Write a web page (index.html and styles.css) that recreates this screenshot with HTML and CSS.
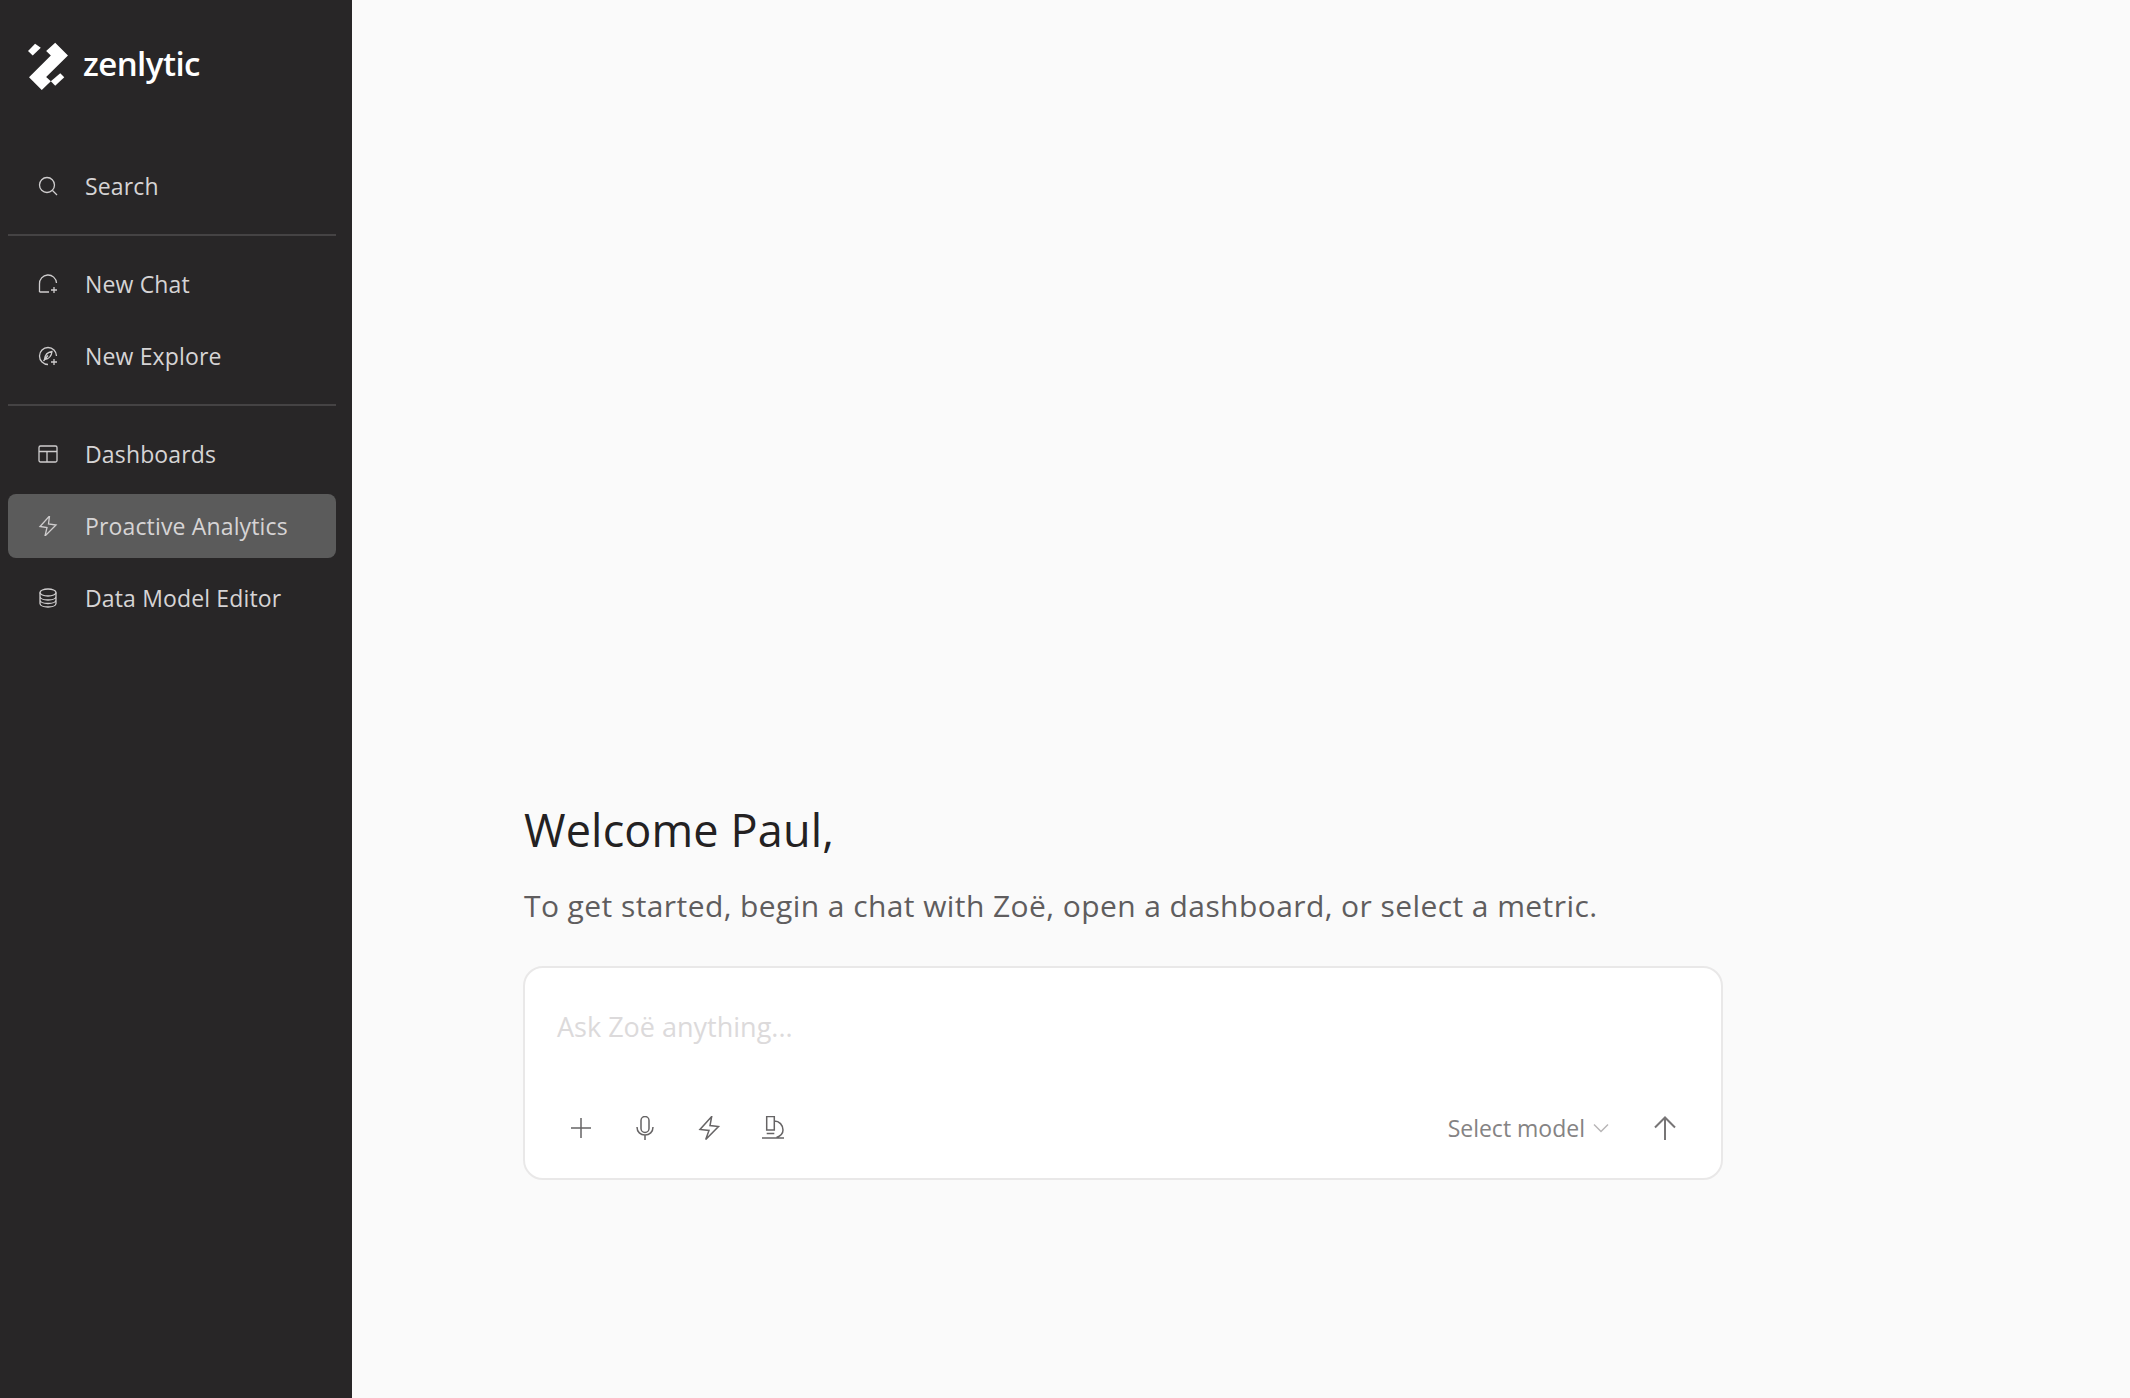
FILE: index.html
```html
<!DOCTYPE html>
<html lang="en">
<head>
<meta charset="utf-8">
<title>Zenlytic</title>
<link rel="stylesheet" href="styles.css">
</head>
<body>
<div class="app">
  <aside class="sidebar">
    <div class="brand">
      <svg class="logo" viewBox="24 35 122 146" fill="#fff">
        <polygon points="24,62 45,40 62,52 38,75"/>
        <polygon points="105,37 143,75 78,139 92,152 65,178 27,140 92,75 78,62"/>
        <polygon points="92,152 120,128 132,140 105,165"/>
      </svg>
      <span class="wordmark">zenlytic</span>
    </div>
    <nav class="nav">
      <a class="item"><svg class="ico" viewBox="0 0 20 20"><circle cx="9" cy="9" r="7.500"/><path d="M14.500 14.500 19 19"/></svg><span>Search</span></a>
      <hr class="rule">
      <a class="item"><svg class="ico" viewBox="0 0 20 20"><path d="M1.500 18V10a8.500 8.500 0 0 1 17-1M1.500 18H11M16 13v6M13 16h6"/></svg><span>New Chat</span></a>
      <a class="item"><svg class="ico" viewBox="0 0 20 20"><path d="M18.500 10a8.500 8.500 0 1 0-8.500 8.500M14 5.500c-4 .5-7 3-7.500 8 4-.5 7-3 7.500-8ZM5.500 15 10 9.500M16 13v6M13 16h6"/></svg><span>New Explore</span></a>
      <hr class="rule">
      <a class="item"><svg class="ico" viewBox="0 0 20 20"><rect x="1" y="2" width="18" height="16" rx="1.500"/><path d="M1 7.500h18M9 7.500V18"/></svg><span>Dashboards</span></a>
      <a class="item active"><svg class="ico" viewBox="0 0 20 20"><path d="M11.500 0 2 10.500l7 1L7 20 18 9l-7.500-1 1-8Z"/></svg><span>Proactive Analytics</span></a>
      <a class="item"><svg class="ico" viewBox="0 0 20 20"><ellipse cx="10" cy="4.500" rx="8" ry="3.500"/><path d="M2 4.500v11c0 2 3.500 3.500 8 3.500s8-1.500 8-3.500v-11M2 8.500c0 2 3.500 3.500 8 3.500s8-1.500 8-3.500M2 12c0 2 3.500 3.500 8 3.500s8-1.500 8-3.500"/></svg><span>Data Model Editor</span></a>
    </nav>
  </aside>
  <main class="main">
    <section class="welcome">
      <h1 class="title">Welcome Paul,</h1>
      <p class="subtitle">To get started, begin a chat with Zoë, open a dashboard, or select a metric.</p>
      <div class="composer">
        <div class="placeholder">Ask Zoë anything...</div>
        <div class="toolbar">
          <div class="tools">
            <svg class="tool" viewBox="0 0 24 24"><path d="M12 2v20M2 12h20"/></svg>
            <svg class="tool" viewBox="0 0 24 24"><rect x="8" y="0.500" width="8" height="16" rx="4"/><path d="M4 11c0 5 3.500 8 8 8s8-3 8-8M12 19v5"/></svg>
            <svg class="tool" viewBox="0 0 24 24"><path d="M14.700 0.500 3 13.500l9 1L8.700 23.500 21.500 10.500 13 9.500l1.700-9Z"/></svg>
            <svg class="tool" viewBox="0 0 24 24"><path d="M1 22h22M5.700 17.500h7.600M5.700 0.500h7.600V14H5.700zM13.300 5c5 0 8.700 4 8.700 9 0 3-2.500 6-6.500 7.500"/></svg>
          </div>
          <div class="send-area">
            <span class="model">Select model</span>
            <svg class="chev" viewBox="0 0 16 10"><path d="M1 1.500 8 8.500 15 1.500"/></svg>
            <svg class="send" viewBox="0 0 22 24"><path d="M11 24V1.500M1 11.500 11 1.500l10 10"/></svg>
          </div>
        </div>
      </div>
    </section>
  </main>
</div>
</body>
</html>
```

FILE: styles.css
```css
* { box-sizing: border-box; }
html, body { margin: 0; height: 100%; }
body {
  font-family: "Open Sans", "Liberation Sans", sans-serif;
  background: #fafafa;
  overflow: hidden;
}
.app { display: flex; height: 1398px; }
.sidebar {
  width: 352px;
  flex: none;
  background: #282627;
  padding: 0 16px 0 8px;
}
.brand {
  display: flex;
  align-items: center;
  gap: 14px;
  height: 64px;
  margin-top: 34px;
  padding-left: 20px;
}
.logo { flex: none; width: 41px; height: 49px; }
.wordmark {
  color: #fff;
  font-size: 33px;
  font-weight: 600;
  letter-spacing: -0.550px;
  margin-top: -5px;
}
.nav { display: flex; flex-direction: column; margin-top: 56px; gap: 8px; }
.item {
  display: flex;
  align-items: center;
  height: 64px;
  padding-left: 30px;
  border-radius: 8px;
  color: #d6d4d5;
  font-size: 23px;
  letter-spacing: 0.150px;
}
.item.active { background: #5b5b5b; }
.ico {
  width: 20px;
  height: 20px;
  flex: none;
  margin-right: 27px;
  fill: none;
  stroke: #cfcdce;
  stroke-width: 1.300;
}
.rule {
  border: 0;
  height: 2px;
  background: #454344;
  margin: 8px 0;
  width: 328px;
}
.main { flex: 1; padding: 797px 0 0 171px; }
.welcome { width: 1200px; }
.title {
  margin: 0 0 0 1px;
  font-size: 45px;
  line-height: 66px;
  font-weight: 400;
  letter-spacing: 0.150px;
  color: #232122;
}
.subtitle {
  margin: 22px 0 0 1px;
  font-size: 30px;
  line-height: 42px;
  letter-spacing: 0.420px;
  color: #5f5d5e;
  white-space: nowrap;
}
.composer {
  margin-top: 39px;
  height: 214px;
  background: #fff;
  border: 2px solid #e9e8e8;
  border-radius: 20px;
  padding: 41px 45px 0 32px;
}
.placeholder {
  font-size: 27px;
  line-height: 36px;
  color: #dcdadb;
}
.toolbar {
  display: flex;
  justify-content: space-between;
  align-items: center;
  margin-top: 67px;
  height: 32px;
}
.tools { display: flex; gap: 40px; margin-left: 12px; }
.tool {
  width: 24px;
  height: 24px;
  fill: none;
  stroke: #666465;
  stroke-width: 1.500;
}
.send-area { display: flex; align-items: center; }
.model {
  font-size: 23px;
  color: #858384;
  margin-right: 8px;
}
.chev { width: 16px; height: 10px; fill: none; stroke: #b8b6b7; stroke-width: 1.500; margin-right: 45px; }
.send { width: 22px; height: 24px; fill: none; stroke: #777576; stroke-width: 2; }
```
